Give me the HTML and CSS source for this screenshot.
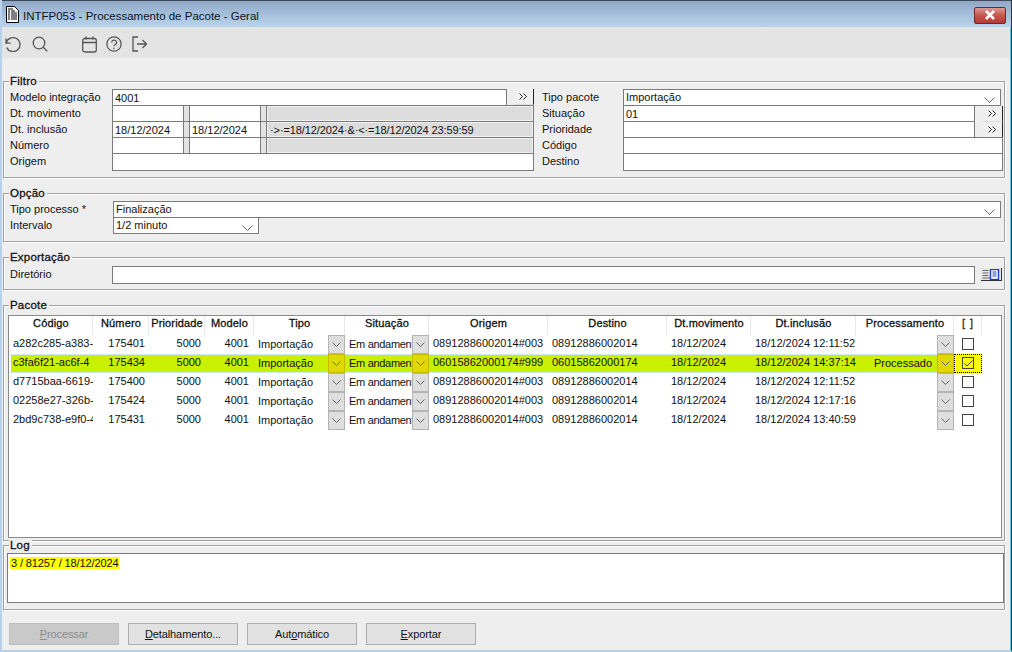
FILE: index.html
```html
<!DOCTYPE html>
<html lang="pt">
<head>
<meta charset="utf-8">
<title>INTFP053 - Processamento de Pacote - Geral</title>
<link rel="stylesheet" href="styles.css">
</head>
<body>
<div class="window">
  <header class="titlebar">
    <svg class="doc-icon" width="14" height="17" viewBox="0 0 14 17"><path d="M1.5.5h8l4 4v12h-12z" fill="#fff" stroke="#000"/><path d="M3 3h5M3 5h2M6 5h4M3 7h2M6 7h6M3 9h2M6 9h6M3 11h2M6 11h6M3 13h2M6 13h6" stroke="#000" fill="none"/></svg>
    <span class="title-text">INTFP053 - Processamento de Pacote - Geral</span>
    <button class="close"><svg width="14" height="10" viewBox="0 0 14 10"><path d="M3 1l8 8M11 1l-8 8" stroke="#fff" stroke-width="2.6" fill="none"/></svg></button>
  </header>
  <nav class="toolbar">
    <svg class="tool tool-undo" width="17" height="16" viewBox="0 0 17 16"><path d="M2 2.5v4.6h4.6" /><path d="M2.2 7a7 7 0 1 1 .5 4.6"/></svg>
    <svg class="tool tool-search" width="16" height="16" viewBox="0 0 16 16"><circle cx="7" cy="7" r="5.8"/><path d="M11.2 11.2l4 4"/></svg>
    <svg class="tool tool-cal" width="15" height="17" viewBox="0 0 15 17"><rect x=".7" y="2.5" width="13.6" height="13.5" rx="2"/><path d="M.7 6.500h13.600M4 .5v3M11 .5v3"/></svg>
    <svg class="tool tool-help" width="16" height="16" viewBox="0 0 17 17"><circle cx="8.5" cy="8.5" r="7.6"/><path d="M6 6.800a2.600 2.500 0 1 1 3.800 2.200c-.9.5-1.300 1-1.300 2"/><path d="M8.500 12.400v1.400"/></svg>
    <svg class="tool tool-exit" width="15" height="16" viewBox="0 0 15 16"><path d="M6 1H1v14h5M5 8h9.500M10.500 4l4 4-4 4"/></svg>
  </nav>
  <main class="content">
    <section class="group group-filtro">
      <h2 class="legend">Filtro</h2>
      <div class="filter-cols">
        <div class="col col-left">
          <div class="row"><label class="lbl">Modelo integração</label><div class="field grow">4001</div><button class="more more-1"><svg class="dbl" width="9" height="7" viewBox="0 0 9 7"><path d="M.5.500l3 3-3 3M4.500.5l3 3-3 3"/></svg></button></div>
          <div class="row"><label class="lbl">Dt. movimento</label><div class="field date"></div><i class="spin"></i><div class="field date"></div><i class="spin"></i><div class="field expr"></div></div>
          <div class="row"><label class="lbl">Dt. inclusão</label><div class="field date">18/12/2024</div><i class="spin"></i><div class="field date">18/12/2024</div><i class="spin"></i><div class="field expr">·&gt;·=18/12/2024·&amp;·&lt;·=18/12/2024 23:59:59</div></div>
          <div class="row"><label class="lbl">Número</label><div class="field date"></div><i class="spin"></i><div class="field date"></div><i class="spin"></i><div class="field expr"></div></div>
          <div class="row"><label class="lbl">Origem</label><div class="field grow tall"></div></div>
        </div>
        <div class="col col-right">
          <div class="row"><label class="lbl lbl-r">Tipo pacote</label><div class="field grow select-r">Importação<svg class="chev" width="11" height="6" viewBox="0 0 11 6"><path d="M.5.500l5 5 5-5"/></svg></div></div>
          <div class="row"><label class="lbl lbl-r">Situação</label><div class="field grow">01</div><button class="more more-2"><svg class="dbl" width="9" height="7" viewBox="0 0 9 7"><path d="M.5.500l3 3-3 3M4.500.5l3 3-3 3"/></svg></button></div>
          <div class="row"><label class="lbl lbl-r">Prioridade</label><div class="field grow"></div><button class="more more-2"><svg class="dbl" width="9" height="7" viewBox="0 0 9 7"><path d="M.5.500l3 3-3 3M4.500.5l3 3-3 3"/></svg></button></div>
          <div class="row"><label class="lbl lbl-r">Código</label><div class="field grow"></div></div>
          <div class="row"><label class="lbl lbl-r">Destino</label><div class="field grow tall"></div></div>
        </div>
      </div>
    </section>

    <section class="group group-opcao">
      <h2 class="legend">Opção</h2>
      <div class="row"><label class="lbl lbl-opt">Tipo processo *</label><div class="field grow select-r">Finalização<svg class="chev" width="11" height="6" viewBox="0 0 11 6"><path d="M.5.500l5 5 5-5"/></svg></div></div>
      <div class="row"><label class="lbl lbl-opt">Intervalo</label><div class="field interval">1/2 minuto<svg class="chev" width="11" height="6" viewBox="0 0 11 6"><path d="M.5.500l5 5 5-5"/></svg></div></div>
    </section>

    <section class="group group-export">
      <h2 class="legend">Exportação</h2>
      <div class="row"><label class="lbl">Diretório</label><div class="field grow tall"></div>
        <button class="browse"><svg width="18" height="11" viewBox="0 0 18 11"><path d="M.5 1.500h6M.5 4h6M.5 6.500h6M.5 9h9" stroke="#6b6b6b" fill="none"/><rect x="8.500" y=".5" width="8" height="10" fill="#fff" stroke="#1a3fd0" stroke-width="1.400"/><path d="M10.500 3h4M10.500 5h4M10.500 7h4" stroke="#1a3fd0"/></svg></button>
      </div>
    </section>

    <section class="group group-pacote">
      <h2 class="legend">Pacote</h2>
      <div class="grid">
        <div class="grid-row head">
          <div class="c c1">Código</div><div class="c c2">Número</div><div class="c c3">Prioridade</div><div class="c c4">Modelo</div><div class="c c5">Tipo</div><div class="c c6">Situação</div><div class="c c7">Origem</div><div class="c c8">Destino</div><div class="c c9">Dt.movimento</div><div class="c c10">Dt.inclusão</div><div class="c c11">Processamento</div><div class="c c12 brk">[ ]</div>
        </div>
        <div class="grid-row">
          <div class="c c1">a282c285-a383-</div><div class="c c2">175401</div><div class="c c3">5000</div><div class="c c4">4001</div><div class="c c5"><span class="low">Importação</span><span class="dd"><svg class="chev2" width="9" height="5" viewBox="0 0 9 5"><path d="M.5.500l4 4 4-4"/></svg></span></div><div class="c c6"><span class="low">Em andamento</span><span class="dd"><svg class="chev2" width="9" height="5" viewBox="0 0 9 5"><path d="M.5.500l4 4 4-4"/></svg></span></div><div class="c c7">08912886002014#003</div><div class="c c8">08912886002014</div><div class="c c9">18/12/2024</div><div class="c c10">18/12/2024 12:11:52</div><div class="c c11"><span class="low proc"></span><span class="dd"><svg class="chev2" width="9" height="5" viewBox="0 0 9 5"><path d="M.5.500l4 4 4-4"/></svg></span></div><div class="c c12"><span class="check"></span></div>
        </div>
        <div class="grid-row selected">
          <div class="c c1">c3fa6f21-ac6f-4</div><div class="c c2">175434</div><div class="c c3">5000</div><div class="c c4">4001</div><div class="c c5"><span class="low">Importação</span><span class="dd"><svg class="chev2" width="9" height="5" viewBox="0 0 9 5"><path d="M.5.500l4 4 4-4"/></svg></span></div><div class="c c6"><span class="low">Em andamento</span><span class="dd"><svg class="chev2" width="9" height="5" viewBox="0 0 9 5"><path d="M.5.500l4 4 4-4"/></svg></span></div><div class="c c7">06015862000174#999</div><div class="c c8">06015862000174</div><div class="c c9">18/12/2024</div><div class="c c10">18/12/2024 14:37:14</div><div class="c c11"><span class="low proc">Processado</span><span class="dd"><svg class="chev2" width="9" height="5" viewBox="0 0 9 5"><path d="M.5.500l4 4 4-4"/></svg></span></div><div class="c c12 focus"><span class="check on"><svg width="9" height="7" viewBox="0 0 9 7"><path d="M.5 3.500l2.500 2.500 5.500-5.500" fill="none" stroke="#333"/></svg></span></div>
        </div>
        <div class="grid-row">
          <div class="c c1">d7715baa-6619-</div><div class="c c2">175400</div><div class="c c3">5000</div><div class="c c4">4001</div><div class="c c5"><span class="low">Importação</span><span class="dd"><svg class="chev2" width="9" height="5" viewBox="0 0 9 5"><path d="M.5.500l4 4 4-4"/></svg></span></div><div class="c c6"><span class="low">Em andamento</span><span class="dd"><svg class="chev2" width="9" height="5" viewBox="0 0 9 5"><path d="M.5.500l4 4 4-4"/></svg></span></div><div class="c c7">08912886002014#003</div><div class="c c8">08912886002014</div><div class="c c9">18/12/2024</div><div class="c c10">18/12/2024 12:11:52</div><div class="c c11"><span class="low proc"></span><span class="dd"><svg class="chev2" width="9" height="5" viewBox="0 0 9 5"><path d="M.5.500l4 4 4-4"/></svg></span></div><div class="c c12"><span class="check"></span></div>
        </div>
        <div class="grid-row">
          <div class="c c1">02258e27-326b-</div><div class="c c2">175424</div><div class="c c3">5000</div><div class="c c4">4001</div><div class="c c5"><span class="low">Importação</span><span class="dd"><svg class="chev2" width="9" height="5" viewBox="0 0 9 5"><path d="M.5.500l4 4 4-4"/></svg></span></div><div class="c c6"><span class="low">Em andamento</span><span class="dd"><svg class="chev2" width="9" height="5" viewBox="0 0 9 5"><path d="M.5.500l4 4 4-4"/></svg></span></div><div class="c c7">08912886002014#003</div><div class="c c8">08912886002014</div><div class="c c9">18/12/2024</div><div class="c c10">18/12/2024 12:17:16</div><div class="c c11"><span class="low proc"></span><span class="dd"><svg class="chev2" width="9" height="5" viewBox="0 0 9 5"><path d="M.5.500l4 4 4-4"/></svg></span></div><div class="c c12"><span class="check"></span></div>
        </div>
        <div class="grid-row">
          <div class="c c1">2bd9c738-e9f0-4</div><div class="c c2">175431</div><div class="c c3">5000</div><div class="c c4">4001</div><div class="c c5"><span class="low">Importação</span><span class="dd"><svg class="chev2" width="9" height="5" viewBox="0 0 9 5"><path d="M.5.500l4 4 4-4"/></svg></span></div><div class="c c6"><span class="low">Em andamento</span><span class="dd"><svg class="chev2" width="9" height="5" viewBox="0 0 9 5"><path d="M.5.500l4 4 4-4"/></svg></span></div><div class="c c7">08912886002014#003</div><div class="c c8">08912886002014</div><div class="c c9">18/12/2024</div><div class="c c10">18/12/2024 13:40:59</div><div class="c c11"><span class="low proc"></span><span class="dd"><svg class="chev2" width="9" height="5" viewBox="0 0 9 5"><path d="M.5.500l4 4 4-4"/></svg></span></div><div class="c c12"><span class="check"></span></div>
        </div>
      </div>
    </section>

    <section class="group group-log">
      <h2 class="legend">Log</h2>
      <div class="logbox"><span class="mark">3 / 81257 / 18/12/2024</span></div>
    </section>

    <footer class="actions">
      <button class="btn disabled"><u>P</u>rocessar</button>
      <button class="btn"><u>D</u>etalhamento...</button>
      <button class="btn">Aut<u>o</u>mático</button>
      <button class="btn"><u>E</u>xportar</button>
    </footer>
  </main>
</div>
</body>
</html>
```
FILE: styles.css
```css
* { box-sizing: border-box; }
html, body { margin: 0; padding: 0; }
body { width: 1012px; height: 652px; overflow: hidden; font-family: "Liberation Sans", Arial, sans-serif; font-size: 11px; color: #111; background: #eee; }
button { font: inherit; color: inherit; padding: 0; }

.window { width: 1012px; height: 652px; display: flex; flex-direction: column; background: #eee; border-left: 2px solid #b9d2ea; border-right: 1px solid #333; border-bottom: 2px solid #b9d2ea; overflow: hidden; }

.titlebar { height: 27px; margin: 0 0 0 -2px; flex: none; display: flex; align-items: center; padding: 4px 4px 0 5px; background: linear-gradient(#8ea8c6, #a5bfdb 50%, #b9d3ec); border-top: 1px solid #3c4a5a; }
.doc-icon { flex: none; margin-top: -3px; }
.title-text { margin-left: 4px; font-size: 11.500px; color: #0c1520; }
.close { margin-left: auto; margin-right: 1px; margin-top: -2px; width: 32px; height: 17px; display: flex; align-items: center; justify-content: center; background: linear-gradient(#dc9a92, #c4574f 50%, #b33b33); border: 1px solid #6d2b28; border-radius: 2px; }

.toolbar { height: 31px; flex: none; display: flex; align-items: center; padding: 3px 0 0 2px; background: #e4e4e4; border-right: 1px solid #5bc6ee; }
.tool { fill: none; stroke: #555; stroke-width: 1.3; flex: none; }
.tool-search { margin-left: 11px; }
.tool-cal { margin-left: 34px; }
.tool-help { margin-left: 9px; }
.tool-exit { margin-left: 10px; }

.content { flex: 1; display: flex; flex-direction: column; padding: 23px 5px 0 1px; border-right: 1px solid #5bc6ee; }

.group { position: relative; border: 1px solid #a0a0a0; flex: none; box-shadow: inset 1px 1px 0 #fff, 1px 1px 0 #fff; }
.legend { position: absolute; top: -7px; left: 5px; margin: 0; padding: 0 2px 0 1px; font-size: 11.500px; line-height: 13px; font-weight: normal; -webkit-text-stroke: .3px #111; letter-spacing: .2px; background: #eee; }

.group-filtro { height: 97px; padding: 7px 1px 0 6px; }
.filter-cols { display: flex; gap: 8px; }
.col-left { width: 524px; flex: none; }
.col-right { flex: 1; }
.row { display: flex; height: 16px; align-items: flex-start; }
.lbl { flex: none; width: 102px; line-height: 17px; white-space: nowrap; color: #111; }
.lbl-r { width: 81px; }
.lbl-opt { width: 103px; }
.field { height: 17px; border: 1px solid #7a7a7a; background: #fff; line-height: 16px; padding: 0 2px; white-space: nowrap; position: relative; }
.grow { flex: 1; }
.tall { height: 18px; }
.date { width: 72px; flex: none; }
.spin { width: 5px; height: 17px; flex: none; background: #e3e3e3; border-top: 1px solid #7a7a7a; }
.expr { flex: 1; background: #dcdcdc; box-shadow: inset 0 0 0 1px #f0f0f0; padding-left: 3px; letter-spacing: -.1px; }
.more { flex: none; height: 16px; background: #f0f0f0; border: 0; border-right: 1px solid #222; border-bottom: 1px solid #ddd; display: flex; align-items: center; justify-content: center; }
.dbl { fill: none; stroke: #222; }
.more-1 { width: 20px; margin-left: 7px; }
.more-2 { width: 21px; margin-left: 7px; margin-top: 1px; }
.select-r { margin-right: 2px; line-height: 15px; }
.chev { position: absolute; right: 5px; top: 7px; fill: none; stroke: #666; }
.interval { width: 146px; flex: none; line-height: 15px; }

.group-opcao { height: 49px; margin-top: 15px; padding: 7px 2px 0 6px; }
.group-opcao .select-r { margin-right: 1px; }

.group-export { height: 33px; margin-top: 15px; padding: 8px 1px 0 6px; }
.browse { flex: none; width: 21px; height: 13px; margin: 2px 1px 0 6px; background: #e6e6e6; border: 0; border-right: 1px solid #333; border-bottom: 1px solid #333; display: flex; align-items: center; justify-content: center; }

.group-pacote { height: 236px; margin-top: 15px; padding: 9px 1px 0 4px; }
.grid { height: 223px; border: 1px solid #8a8a8a; background: #fff; margin-right: 1px; }
.grid-row { display: flex; height: 19px; line-height: 17px; }
.grid-row.head { line-height: 14px; -webkit-text-stroke: .3px #111; letter-spacing: .15px; }
.c { flex: none; white-space: nowrap; overflow: hidden; padding: 0 0 0 4px; display: flex; align-items: flex-start; }
.c1 { width: 84px; }
.c2 { width: 56px; justify-content: flex-end; padding-right: 4px; }
.c3 { width: 56px; justify-content: flex-end; padding-right: 4px; }
.c4 { width: 49px; justify-content: flex-end; padding-right: 5px; }
.c5 { width: 91px; }
.c6 { width: 84px; }
.c6 .low { letter-spacing: -.3px; }
.c7 { width: 119px; }
.c8 { width: 119px; }
.c9 { width: 84px; }
.c10 { width: 105px; }
.c11 { width: 98px; }
.c12 { width: 28px; padding: 0; justify-content: center; }
.head .c { justify-content: center; padding: 0; background: linear-gradient(90deg, #fff calc(100% - 1px), #e8e8e8 0); }
.brk { color: #7a3300; letter-spacing: 1px; }
.low { padding-top: 1px; flex: 1; min-width: 0; overflow: hidden; }
.proc { text-align: right; padding-right: 5px; }
.dd { flex: none; width: 17px; height: 19px; background: #dedede; border: 1px solid #b4b4b4; display: flex; align-items: center; justify-content: center; }
.chev2 { fill: none; stroke: #666; }
.selected { background: linear-gradient(90deg, #fff 2px, #c8f000 2px, #c8f000 973px, #fff 973px); }
.selected .c { box-shadow: inset 0 1px 0 #cfe8f5, inset 0 -1px 0 #cfe8f5; }
.selected .c1 { background: linear-gradient(90deg, #fff 2px, transparent 2px); }
.selected .dd { background: #e0d800; border-color: #c8b800; }
.check { display: block; width: 12px; height: 12px; margin-top: 3px; border: 1px solid #444; background: #fff; }
.check.on { background: #ffff00; display: flex; align-items: center; justify-content: center; }
.selected .focus { background: #ffff00; outline: 1px dotted #000; outline-offset: -1px; box-shadow: none; }

.group-log { height: 65px; margin-top: 4px; padding: 7px 0 0 3px; }
.logbox { height: 50px; border: 1px solid #7a7a7a; background: #fff; padding: 3px 2px; line-height: 13px; }
.mark { background: #ffff00; padding: 0 1px; letter-spacing: -.12px; }

.actions { display: flex; gap: 9px; margin-top: 13px; padding-left: 6px; }
.btn { width: 110px; height: 22px; background: #e1e1e1; border: 1px solid #adadad; letter-spacing: -.1px; }
.btn.disabled { background: #c9c9c9; border-color: #bdbdbd; color: #8c8c8c; }
```
